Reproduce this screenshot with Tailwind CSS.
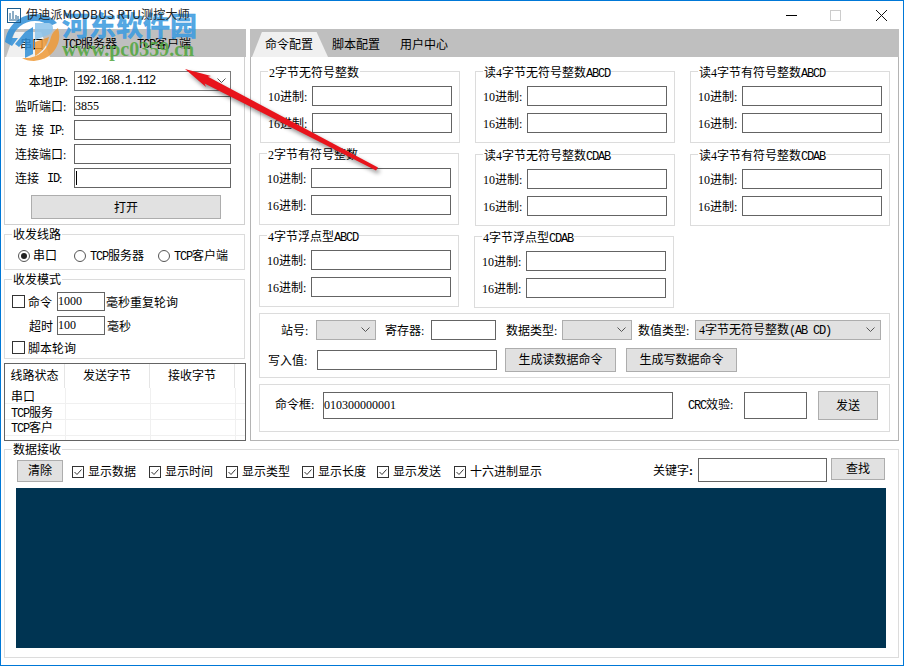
<!DOCTYPE html>
<html lang="en">

<head>
    <meta charset="UTF-8" />
    <title>伊迪派MODBUS RTU测控大师</title>
    <script src="https://cdn.jsdelivr.net/npm/@tailwindcss/browser@4"></script>
</head>

<body class="bg-white overflow-hidden">
    <div id="app"
        class="relative w-[904px] h-[666px] overflow-hidden bg-white border border-[#0078d7] text-[12px] leading-[16px] text-black font-['Liberation_Serif','Noto_Sans_CJK_SC',serif]">

        <!-- Title bar -->
        <div class="relative z-10 h-[28px] flex items-center">
            <svg class="ml-[6px] w-[14px] h-[15px]" viewBox="0 0 14 15" fill="none" stroke="#1d5c8c">
                <rect x="0.5" y="0.5" width="13" height="14" />
                <path d="M3 5v6M6 3v8M9 7v4M11 8v3M2 12h10" />
            </svg>
            <span class="ml-[5px] -mt-[2px] tracking-[0.2px] font-['Noto_Sans_CJK_SC',sans-serif] text-[#222]">伊迪派MODBUS RTU测控大师</span>
            <div class="ml-auto mr-[16px] flex items-center">
                <svg class="w-[11px] h-[11px] mr-[33px]" viewBox="0 0 11 11" stroke="#000"><path d="M0 5.5h11" /></svg>
                <svg class="w-[11px] h-[11px] mr-[35px]" viewBox="0 0 11 11" fill="none" stroke="#ccc"><rect x="0.5" y="0.5" width="10" height="10" /></svg>
                <svg class="w-[11px] h-[11px]" viewBox="0 0 11 11" stroke="#111"><path d="M0 0l11 11M11 0L0 11" /></svg>
            </div>
        </div>

        <div class="flex pl-[3px]">
            <!-- Left column -->
            <div class="w-[242px]">
                <div class="h-[28px] bg-[#bfbfbf] flex items-end relative">
                    <div class="absolute left-[2px] bottom-0 w-[44px] h-[25px] bg-[#f0f0f0] [clip-path:polygon(0_100%,20%_0,80%_0,100%_100%)]"></div>
                    <span class="relative ml-[16px] mb-[4px] w-[43px]">串口</span>
                    <span class="relative mb-[4px] w-[74px]"><span class="font-['Liberation_Mono'] tracking-[-1.2px]">TCP</span>服务器</span>
                    <span class="relative mb-[4px]"><span class="font-['Liberation_Mono'] tracking-[-1.2px]">TCP</span>客户端</span>
                </div>
                <div class="h-[168px] w-[241px] border border-t-0 border-[#d0d0d0] pt-[14px]">
                    <div class="flex items-center h-[20px]">
                        <span class="w-[69px] text-right pr-[6px] pt-[2px]">本地<span class="font-['Liberation_Mono'] tracking-[-1.2px]">IP</span>:</span>
                        <div class="w-[157px] h-[20px] border border-[#7a7a7a] flex items-center pl-[2px] justify-between">
                            <span class="font-['Liberation_Mono'] tracking-[-1.2px]">192.168.1.112</span>
                            <svg class="w-[9px] h-[6px] mr-[4px]" viewBox="0 0 9 6" fill="none" stroke="#555"><path d="M0.5 0.5l4 4 4-4" /></svg>
                        </div>
                    </div>
                    <div class="flex items-center h-[20px] mt-[5px]">
                        <span class="w-[69px] pl-[10px] pt-[2px]">监听端口:</span>
                        <input class="w-[157px] h-[20px] border border-[#646464] outline-none" value="3855" />
                    </div>
                    <div class="flex items-center h-[20px] mt-[4px]">
                        <span class="w-[69px] pl-[10px] pt-[2px] flex"><span>连</span><span class="ml-[5px]">接</span><span class="ml-[5px] font-['Liberation_Mono'] tracking-[-1.2px]">IP</span>:</span>
                        <input class="w-[157px] h-[20px] border border-[#646464] outline-none" />
                    </div>
                    <div class="flex items-center h-[20px] mt-[4px]">
                        <span class="w-[69px] pl-[10px] pt-[2px]">连接端口:</span>
                        <input class="w-[157px] h-[20px] border border-[#646464] outline-none" />
                    </div>
                    <div class="flex items-center h-[20px] mt-[4px]">
                        <span class="w-[69px] pl-[10px] pt-[2px] flex"><span>连接</span><span class="ml-[8px] font-['Liberation_Mono'] tracking-[-1.2px]">ID</span>:</span>
                        <div class="w-[157px] h-[20px] border border-[#646464] flex items-center pl-[1px]"><div class="w-[1px] h-[14px] bg-black"></div></div>
                    </div>
                    <button class="block ml-[26px] mt-[7px] w-[190px] h-[24px] pt-[2px] bg-[#e1e1e1] border border-[#adadad]">打开</button>
                </div>

                <!-- 收发线路 -->
                <div class="relative mt-[9px] w-[241px] h-[36px] border border-[#dcdcdc] flex items-center pt-[8px]">
                    <span class="absolute -top-[8px] left-[7px] bg-white px-[1px]">收发线路</span>
                    <span class="ml-[13px] w-[12px] h-[12px] rounded-full border border-[#555] flex items-center justify-center"><span class="w-[6px] h-[6px] rounded-full bg-[#222]"></span></span>
                    <span class="ml-[3px] w-[41px]">串口</span>
                    <span class="w-[12px] h-[12px] rounded-full border border-[#555]"></span>
                    <span class="ml-[4px] w-[68px]"><span class="font-['Liberation_Mono'] tracking-[-1.2px]">TCP</span>服务器</span>
                    <span class="w-[12px] h-[12px] rounded-full border border-[#555]"></span>
                    <span class="ml-[4px]"><span class="font-['Liberation_Mono'] tracking-[-1.2px]">TCP</span>客户端</span>
                </div>

                <!-- 收发模式 -->
                <div class="relative mt-[9px] w-[241px] h-[80px] border border-[#dcdcdc] pt-[12px]">
                    <span class="absolute -top-[8px] left-[7px] bg-white px-[1px]">收发模式</span>
                    <div class="flex items-center h-[19px]">
                        <span class="ml-[7px] w-[13px] h-[13px] border border-[#333]"></span>
                        <span class="ml-[3px] w-[29px] pt-[2px]">命令</span>
                        <input class="w-[48px] h-[19px] border border-[#646464] outline-none" value="1000" />
                        <span class="ml-[1px] pt-[2px]">毫秒重复轮询</span>
                    </div>
                    <div class="flex items-center h-[19px] mt-[5px]">
                        <span class="ml-[24px] w-[28px] pt-[2px]">超时</span>
                        <input class="w-[48px] h-[19px] border border-[#646464] outline-none" value="100" />
                        <span class="ml-[2px] pt-[2px]">毫秒</span>
                    </div>
                    <div class="flex items-center h-[13px] mt-[6px]">
                        <span class="ml-[7px] w-[13px] h-[13px] border border-[#333]"></span>
                        <span class="ml-[3px] pt-[2px]">脚本轮询</span>
                    </div>
                </div>

                <!-- 线路状态 -->
                <div class="mt-[4px] w-[242px] h-[78px] border border-[#646464] overflow-hidden">
                    <div class="flex h-[24px] items-center text-center">
                        <span class="w-[60px] h-full leading-[24px] border-r border-[#e5e5e5]">线路状态</span>
                        <span class="w-[85px] h-full leading-[24px] border-r border-[#e5e5e5]">发送字节</span>
                        <span class="w-[85px] h-full leading-[24px] border-r border-[#e5e5e5]">接收字节</span>
                    </div>
                    <div class="flex h-[16px] leading-[18px] border-b border-[#f0f0f0]">
                        <span class="w-[61px] pl-[6px] border-r border-[#f0f0f0]">串口</span>
                        <span class="w-[85px] border-r border-[#f0f0f0]"></span>
                        <span class="w-[85px] border-r border-[#f0f0f0]"></span>
                    </div>
                    <div class="flex h-[16px] leading-[18px] border-b border-[#f0f0f0]">
                        <span class="w-[61px] pl-[6px] border-r border-[#f0f0f0]"><span class="font-['Liberation_Mono'] tracking-[-1.2px]">TCP</span>服务</span>
                        <span class="w-[85px] border-r border-[#f0f0f0]"></span>
                        <span class="w-[85px] border-r border-[#f0f0f0]"></span>
                    </div>
                    <div class="flex h-[16px] leading-[16px] border-b border-[#f0f0f0]">
                        <span class="w-[61px] pl-[6px] border-r border-[#f0f0f0]"><span class="font-['Liberation_Mono'] tracking-[-1.2px]">TCP</span>客户</span>
                        <span class="w-[85px] border-r border-[#f0f0f0]"></span>
                        <span class="w-[85px] border-r border-[#f0f0f0]"></span>
                    </div>
                    <div class="flex h-[5px]">
                        <span class="w-[61px] border-r border-[#f0f0f0]"></span>
                        <span class="w-[85px] border-r border-[#f0f0f0]"></span>
                        <span class="w-[85px] border-r border-[#f0f0f0]"></span>
                    </div>
                </div>
            </div>

            <!-- Right column -->
            <div class="ml-[4px] w-[649px]">
                <div class="h-[28px] bg-[#bfbfbf] flex items-end relative">
                    <div class="absolute left-[2px] bottom-0 w-[76px] h-[25px] bg-[#f0f0f0] [clip-path:polygon(0_100%,13%_0,85%_0,100%_100%)]"></div>
                    <span class="relative ml-[15px] mb-[4px] w-[67px]">命令配置</span>
                    <span class="relative mb-[4px] w-[68px]">脚本配置</span>
                    <span class="relative mb-[4px]">用户中心</span>
                </div>
                <div class="h-[384px] border border-t-0 border-[#b4b4b4] pl-[8px] pt-[14px]">
                    <div id="row1" class="flex h-[72px]"></div>
                    <div id="row2" class="flex mt-[10px] h-[73px]"></div>
                    <div id="row3" class="flex mt-[9px] h-[73px]"></div>

                    <!-- 站号 etc -->
                    <div class="mt-[5px] w-[631px] h-[65px] border border-[#dcdcdc] pt-[6px]">
                        <div class="flex items-center h-[20px]">
                            <span class="ml-[21px] w-[35px] pt-[2px]">站号:</span>
                            <div class="w-[60px] h-[20px] bg-[#e1e1e1] border border-[#adadad] flex items-center justify-end pr-[5px]"><svg class="w-[9px] h-[6px]" viewBox="0 0 9 6" fill="none" stroke="#555"><path d="M0.5 0.5l4 4 4-4" /></svg></div>
                            <span class="ml-[9px] w-[46px] pt-[2px]">寄存器:</span>
                            <input class="w-[65px] h-[20px] border border-[#646464] outline-none" />
                            <span class="ml-[10px] w-[56px] pt-[2px]">数据类型:</span>
                            <div class="w-[70px] h-[20px] bg-[#e1e1e1] border border-[#adadad] flex items-center justify-end pr-[5px]"><svg class="w-[9px] h-[6px]" viewBox="0 0 9 6" fill="none" stroke="#555"><path d="M0.5 0.5l4 4 4-4" /></svg></div>
                            <span class="ml-[6px] w-[57px] pt-[2px]">数值类型:</span>
                            <div class="w-[186px] h-[20px] bg-[#e1e1e1] border border-[#adadad] flex items-center justify-between pl-[3px] pr-[5px]"><span>4字节无符号整数<span class="font-['Liberation_Mono'] tracking-[-1.2px]">(AB CD)</span></span><svg class="w-[9px] h-[6px]" viewBox="0 0 9 6" fill="none" stroke="#555"><path d="M0.5 0.5l4 4 4-4" /></svg></div>
                        </div>
                        <div class="flex items-center h-[24px] mt-[8px]">
                            <span class="ml-[8px] w-[49px] pt-[2px]">写入值:</span>
                            <input class="w-[180px] h-[20px] border border-[#646464] outline-none" />
                            <button class="ml-[8px] w-[111px] h-[24px] bg-[#e1e1e1] border border-[#adadad]">生成读数据命令</button>
                            <button class="ml-[10px] w-[111px] h-[24px] bg-[#e1e1e1] border border-[#adadad]">生成写数据命令</button>
                        </div>
                    </div>

                    <!-- 命令框 -->
                    <div class="mt-[6px] w-[631px] h-[48px] border border-[#dcdcdc] flex items-start pt-[7px]">
                        <span class="ml-[15px] w-[48px] leading-[27px]">命令框:</span>
                        <input class="w-[350px] h-[27px] border border-[#646464] outline-none" value="010300000001" />
                        <span class="ml-[15px] w-[56px] leading-[27px]"><span class="font-['Liberation_Mono'] tracking-[-1.2px]">CRC</span>效验:</span>
                        <input class="w-[63px] h-[27px] border border-[#646464] outline-none" />
                        <button class="ml-[11px] -mt-[1px] w-[60px] h-[29px] bg-[#e1e1e1] border border-[#adadad]">发送</button>
                    </div>
                </div>
            </div>
        </div>

        <!-- 数据接收 -->
        <div class="relative ml-[3px] mt-[8px] w-[895px] h-[209px] border border-[#dcdcdc]">
            <span class="absolute -top-[8px] left-[7px] bg-white px-[1px]">数据接收</span>
            <div class="flex items-start pt-[8px] h-[38px]">
                <button class="ml-[12px] mt-[2px] w-[46px] h-[22px] bg-[#e1e1e1] border border-[#adadad]">清除</button>
                <div id="checks" class="flex mt-[7px] ml-[9px]"></div>
                <span class="ml-auto mt-[5px]">关键字<b>:</b></span>
                <input class="ml-[5px] w-[129px] h-[24px] border border-[#646464] outline-none" />
                <button class="ml-[4px] mr-[13px] w-[54px] h-[22px] bg-[#e1e1e1] border border-[#adadad]">查找</button>
            </div>
            <div class="ml-[11px] w-[870px] h-[160px] bg-[#003452]"></div>
        </div>

        <!-- Watermark over the top left corner -->
        <svg class="absolute left-[3px] top-[11px] w-[58px] h-[52px] opacity-85" viewBox="0 0 58 52">
            <path d="M1 30C3 13 17 2 32 2c9 0 16 3 21 9l-7 3c-4-3-9-5-15-5C19 9 11 17 8 26l6 0-6 8z" fill="#2f8fd8" />
            <path d="M11 32l10-12 8-5v27l-8 4V29l-6 6z" fill="#2f8fd8" />
            <path d="M31 11h14c6 1 5 10-1 12l-13 5z" fill="#8cc4ec" />
            <path d="M54 16c5 15-5 32-24 33-5 0-9-1-12-3 16 1 26-8 29-21 1-4 4-7 7-9z" fill="#ef9a37" />
            <path d="M31 30l14-5c-2 9-7 15-14 19z" fill="#ef9a37" />
        </svg>
        <span class="absolute left-[61px] top-[7px] text-[27px] leading-[34px] font-bold whitespace-nowrap text-[#3d9ce0]/90 [-webkit-text-stroke:0.5px_#3d9ce0] font-['Noto_Sans_CJK_SC',sans-serif]">河东软件园</span>
        <span class="absolute left-[61px] top-[37px] text-[20px] leading-[22px] font-bold whitespace-nowrap text-[#4fa63c]/85 font-['Liberation_Serif',serif]">www.pc0359.cn</span>

        <!-- Red arrow -->
        <svg class="absolute -left-[1px] -top-[1px] w-[904px] h-[666px] pointer-events-none drop-shadow-[2px_3px_2px_rgba(0,0,0,0.45)]" viewBox="0 0 904 666">
            <path d="M185 69L211 76 208 76.800 378 167.600 376 170.600 204.600 83.400 206 87z" fill="#e8141c" />
        </svg>
    </div>

    <script>
        const label = (text) => `<div class="flex items-center h-[20px]"><span class="ml-[7px] w-[44px] pt-[2px]">${text}进制:</span><input class="w-[140px] h-[20px] border border-[#646464] outline-none" /></div>`;

        // one number group: title plus the 10 and 16 inputs
        function group(title, extra) {
            return `<div class="relative w-[200px] h-[72px] border border-[#dcdcdc] pt-[14px] ${extra}">
                <span class="absolute -top-[7px] left-[7px] bg-white px-[1px] whitespace-nowrap">${title}</span>
                ${label('10')}
                <div class="mt-[7px]">${label('16')}</div>
            </div>`;
        }

        const latin = (t) => `<span class="font-['Liberation_Mono'] tracking-[-1.2px]">${t}</span>`;

        document.getElementById('row1').innerHTML =
            group('2字节无符号整数', 'ml-[1px]') +
            group('读4字节无符号整数' + latin('ABCD'), 'ml-[15px]') +
            group('读4字节有符号整数' + latin('ABCD'), 'ml-[15px]');
        document.getElementById('row2').innerHTML =
            group('2字节有符号整数', '') +
            group('读4字节无符号整数' + latin('CDAB'), 'ml-[16px] mt-[1px]') +
            group('读4字节有符号整数' + latin('CDAB'), 'ml-[15px] mt-[1px]');
        document.getElementById('row3').innerHTML =
            group('4字节浮点型' + latin('ABCD'), '') +
            group('4字节浮点型' + latin('CDAB'), 'ml-[15px] mt-[1px]');

        // 显示 checkboxes, ticked
        const checks = [['显示数据', 'w-[77px]'], ['显示时间', 'w-[77px]'], ['显示类型', 'w-[76px]'], ['显示长度', 'w-[75px]'], ['显示发送', 'w-[77px]'], ['十六进制显示', 'w-[90px]']];
        document.getElementById('checks').innerHTML = checks.map(([t, w]) =>
            `<div class="flex items-center h-[14px] ${w}"><svg class="w-[12px] h-[12px] mr-[4px] shrink-0" viewBox="0 0 12 12" fill="none" stroke="#333"><rect x="0.5" y="0.5" width="11" height="11" /><path d="M2.500 6l2.500 2.500 4.500-5" /></svg><span class="whitespace-nowrap">${t}</span></div>`
        ).join('');
    </script>
</body>

</html>
